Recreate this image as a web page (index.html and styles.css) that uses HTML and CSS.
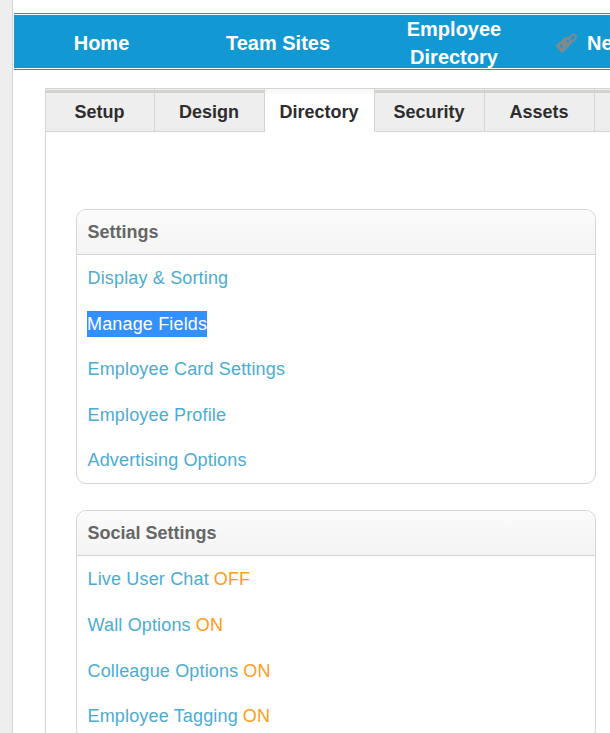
FILE: index.html
```html
<!DOCTYPE html>
<html lang="en">
<head>
<meta charset="utf-8">
<title>Directory Settings</title>
<link rel="stylesheet" href="styles.css">
</head>
<body>
<div class="page">
  <aside class="gutter"></aside>
  <main class="content">
    <nav class="topnav">
      <a class="nav-item nav-item-home">Home</a>
      <a class="nav-item">Team Sites</a>
      <a class="nav-item">Employee Directory</a>
      <a class="nav-item nav-item-news">
        <svg class="tag-icon" viewBox="0 0 22 22" width="22" height="22" aria-hidden="true">
          <path fill="#7f8a8f" fill-rule="evenodd" d="M0.5 14 L9.5 5.5 L15.5 5 L17 11 L8 20.5 L6.5 20.5 Z M12.8 7.6 a1.3 1.3 0 1 0 .01 0 Z M6.5 13 a1.4 1.4 0 1 0 .01 0 Z"/>
          <path fill="none" stroke="#7f8a8f" stroke-width="2" d="M13 8 C15 3 19 1.5 20.5 3.5 C22 5.5 19.5 9.5 15 10"/>
        </svg>
        <span>News</span>
      </a>
    </nav>
    <section class="panel">
      <div class="tabs">
        <a class="tab">Setup</a>
        <a class="tab">Design</a>
        <a class="tab tab-active">Directory</a>
        <a class="tab">Security</a>
        <a class="tab">Assets</a>
        <a class="tab"></a>
      </div>
      <div class="panel-body">
        <div class="card">
          <h2 class="card-title">Settings</h2>
          <ul class="card-list">
            <li class="card-row"><a class="link">Display &amp; Sorting</a></li>
            <li class="card-row"><a class="link link-selected">Manage Fields</a></li>
            <li class="card-row"><a class="link">Employee Card Settings</a></li>
            <li class="card-row"><a class="link">Employee Profile</a></li>
            <li class="card-row"><a class="link">Advertising Options</a></li>
          </ul>
        </div>
        <div class="card">
          <h2 class="card-title">Social Settings</h2>
          <ul class="card-list">
            <li class="card-row"><a class="link">Live User Chat</a> <span class="state">OFF</span></li>
            <li class="card-row"><a class="link">Wall Options</a> <span class="state">ON</span></li>
            <li class="card-row"><a class="link">Colleague Options</a> <span class="state">ON</span></li>
            <li class="card-row"><a class="link">Employee Tagging</a> <span class="state">ON</span></li>
          </ul>
        </div>
      </div>
    </section>
  </main>
</div>
</body>
</html>
```
FILE: styles.css
```css
* { box-sizing: border-box; }
html, body { margin: 0; padding: 0; height: 100%; overflow: hidden; background: #fff; }
body { font-family: "Liberation Sans", Arial, sans-serif; }
.page { display: flex; width: 610px; height: 733px; overflow: hidden; }
.gutter { flex: 0 0 13px; background: #eeeeee; border-right: 1px solid #d4d4d4; }
.content { flex: 0 0 597px; min-width: 0; padding: 13px 0 0 1px; overflow: hidden; }

.topnav {
  display: flex; width: 596px; height: 57px; overflow: hidden;
  background: #1299d4;
  border-top: 1px solid #2b8dc0; border-bottom: 1px solid #2b8dc0;
  box-shadow: inset 0 1px 0 #fff, inset 0 -1px 0 #fff;
}
.nav-item {
  flex: 0 0 176px; display: flex; align-items: center; justify-content: center;
  padding-top: 2px;
  text-align: center; color: #fff; font-size: 20px; font-weight: 700; line-height: 28px;
}
.nav-item-home { flex-basis: 175px; margin-right: 1px; }
.nav-item-news { flex: 0 0 120px; justify-content: flex-start; padding-left: 13px; gap: 10px; }
.tag-icon { flex: none; }

.panel { margin: 18px 0 0 31px; border-left: 1px solid #d4d4d4; width: 700px; }
.tabs { display: flex; height: 44px; }
.tab {
  flex: 0 0 110px; display: flex; align-items: center; justify-content: center;
  padding: 5px 1px 0 0;
  background: linear-gradient(#f0f0ee 1px, #d3d3cd 1px, #d3d3cd 4px, #eeeeee 4px);
  color: #2d2d2d; font-size: 18px; font-weight: 700;
  border-top: 1px solid #d4d4d4; border-right: 1px solid #d4d4d4; border-bottom: 1px solid #d4d4d4;
}
.tab:first-child { flex-basis: 109px; }
.tab-active { background: linear-gradient(#f8f8f8 4px, #fff 4px); border-bottom-color: #fff; }

.panel-body { padding: 77px 0 0 30px; }
.card {
  width: 520px; margin-bottom: 26.2px;
  border: 1px solid #d4d4d4; border-radius: 10px; overflow: hidden; background: #fff;
}
.card-title {
  margin: 0; height: 45px; padding-left: 10.5px;
  display: flex; align-items: center;
  font-size: 18px; font-weight: 700; color: #666;
  background: linear-gradient(#fbfbfb, #f4f4f4);
  border-bottom: 1px solid #d4d4d4;
}
.card-list { list-style: none; margin: 0; padding: 0.7px 10px 0 10.5px; }
.card-row {
  height: 45.7px; display: flex; align-items: center; gap: 5px;
  font-size: 18px; letter-spacing: 0.16px; color: #4bacd3;
}
.card-row:last-child { height: 44.5px; }
.link { color: #4bacd3; }
.link-selected { margin-left: -0.5px; background: #3390ff; color: #fff; line-height: 26px; }
.state { color: #ff9c1a; }
```
